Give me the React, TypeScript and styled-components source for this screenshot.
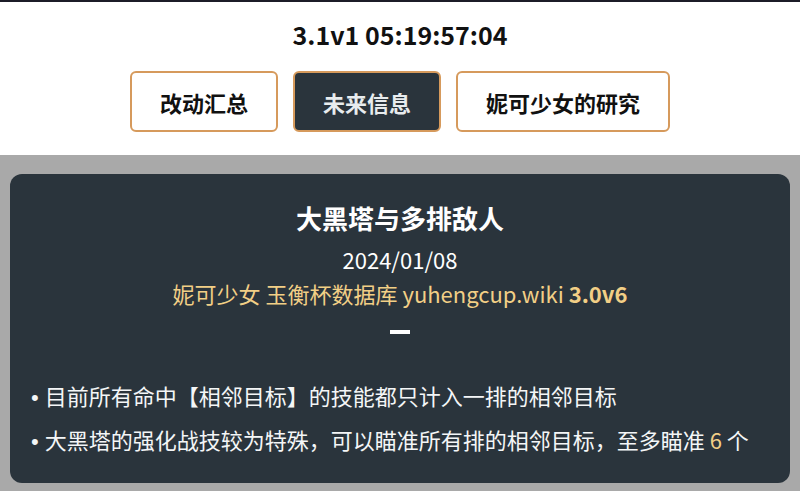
import React from 'react'
import styled, { createGlobalStyle } from 'styled-components'

const GlobalStyle = createGlobalStyle`
  html, body {
    margin: 0;
    padding: 0;
    background: #a9a9a9;
    font-family: "Noto Sans CJK SC", "Noto Sans", sans-serif;
  }
`

const Header = styled.header`
  background: #fff;
  border-top: 2px solid #1c1c28;
  height: 155px;
  display: flex;
  flex-direction: column;
  align-items: center;
  box-sizing: border-box;
`

const Countdown = styled.h1`
  margin: 15px 0 0;
  font-size: 25px;
  line-height: 34px;
  font-weight: 700;
  color: #111;
`

const Tabs = styled.nav`
  display: flex;
  gap: 15px;
  margin-top: 20px;
`

const Tab = styled.button<{ $active?: boolean }>`
  height: 61px;
  padding: 0 28px;
  border: 2px solid #d69a5c;
  border-radius: 6px;
  background: ${p => (p.$active ? '#2a343c' : '#fff')};
  color: ${p => (p.$active ? '#e8ecee' : '#111')};
  font-family: inherit;
  font-size: 22px;
  font-weight: 700;
  box-sizing: border-box;
`

const Main = styled.main`
  padding: 19px 10px 8px;
`

const Card = styled.section`
  background: #2a343c;
  border-radius: 12px;
  padding: 26px 20px 28px;
  color: #fff;
  display: flex;
  flex-direction: column;
  align-items: center;
`

const Title = styled.h2`
  margin: 0;
  font-size: 26px;
  line-height: 36px;
  font-weight: 700;
`

const Date = styled.div`
  margin-top: 8px;
  font-size: 22px;
  line-height: 30px;
`

const Source = styled.div`
  margin-top: 4px;
  font-size: 22px;
  line-height: 30px;
  color: #f2cf86;

  b {
    font-weight: 700;
  }
`

const Divider = styled.div`
  width: 20px;
  height: 4px;
  background: #fff;
  margin-top: 22px;
`

const List = styled.ul`
  align-self: stretch;
  list-style: none;
  margin: 45px 0 0;
  padding: 0 0 0 1px;
  display: flex;
  flex-direction: column;
  gap: 12px;
`

const Item = styled.li`
  font-size: 22px;
  line-height: 32px;
  height: 32px;
  color: #f4f6f7;
  &::before {
    content: '•';
    font-family: "Liberation Sans", sans-serif;
    margin-right: 6px;
  }
`

const Num = styled.span`
  color: #f2cf86;
`

export default function App() {
  return (
    <>
      <GlobalStyle />
      <Header>
        <Countdown>3.1v1 05:19:57:04</Countdown>
        <Tabs>
          <Tab>改动汇总</Tab>
          <Tab $active>未来信息</Tab>
          <Tab>妮可少女的研究</Tab>
        </Tabs>
      </Header>
      <Main>
        <Card>
          <Title>大黑塔与多排敌人</Title>
          <Date>2024/01/08</Date>
          <Source>
            妮可少女 玉衡杯数据库 yuhengcup.wiki <b>3.0v6</b>
          </Source>
          <Divider />
          <List>
            <Item>目前所有命中【相邻目标】的技能都只计入一排的相邻目标</Item>
            <Item>
              大黑塔的强化战技较为特殊，可以瞄准所有排的相邻目标，至多瞄准 <Num>6</Num> 个
            </Item>
          </List>
        </Card>
      </Main>
    </>
  )
}
